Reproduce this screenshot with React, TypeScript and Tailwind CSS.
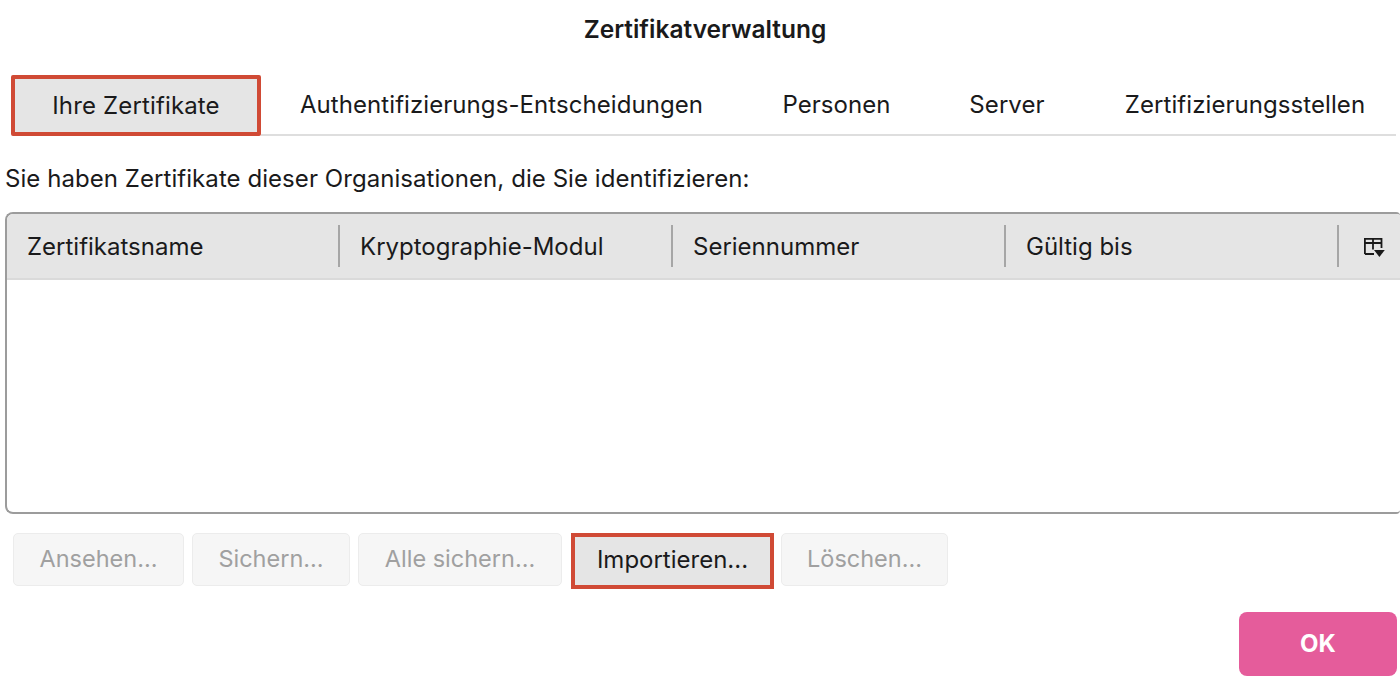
import React from 'react';

const tabs = ['Authentifizierungs-Entscheidungen', 'Personen', 'Server', 'Zertifizierungsstellen'];
const tabWidths = ['w-[481px]', 'w-[189px]', 'w-[152px]', 'w-[313px] pl-[11px]'];
const columns = ['Zertifikatsname', 'Kryptographie-Modul', 'Seriennummer', 'Gültig bis'];

const ColumnPickerIcon = () => (
  <svg width="22" height="22" viewBox="0 0 22 22" fill="none">
    <path d="M1.9 18V2.9H18.5V12M1.9 7H18.5M10 2.9V13.5M1.9 18H11" stroke="#1a1a1a" strokeWidth="1.8" />
    <path d="M11 14H21.8L16.4 21Z" fill="#1a1a1a" />
  </svg>
);

const DisabledButton: React.FC<{ label: string; width: string }> = ({ label, width }) => (
  <button className={`${width} h-[53px] pb-[1px] rounded-[5px] border border-[#ececec] bg-[#f6f6f6] text-[#a0a0a0] text-[23.5px]`}>
    {label}
  </button>
);

export default function App() {
  return (
    <div className="w-[1400px] h-[686px] overflow-hidden bg-white text-[#1a1a1b] font-['Inter',sans-serif]">
      <h1 className="pt-[14px] pl-[10px] h-[75px] text-center text-[24.5px] leading-[30px] font-semibold">Zertifikatverwaltung</h1>

      <div className="flex pl-[11px] pr-[4px]">
        <div className="w-[250px] h-[61px] flex items-center justify-center border-4 border-[#d04a35] bg-[#e5e5e5] rounded-[2px] text-[24px] tracking-[0.15px]">
          Ihre Zertifikate
        </div>
        <div className="flex-1 flex h-[61px] border-b-2 border-[#dedede]">
          {tabs.map((tab, i) => (
            <div key={tab} className={`${tabWidths[i]} flex items-center justify-center text-[24px] tracking-[0.07px]`}>
              {tab}
            </div>
          ))}
        </div>
      </div>

      <p className="pl-[5px] pt-[27px] h-[76px] text-[24px] leading-[32px] tracking-[0.06px] whitespace-nowrap">Sie haben Zertifikate dieser Organisationen, die Sie identifizieren:</p>

      <div className="ml-[5px] h-[302px] rounded-l-[8px] rounded-r-[4px] border-2 border-r-0 border-[#9c9c9c] overflow-hidden">
        <div className="flex items-center h-[66px] bg-[#e5e5e5] border-b-2 border-[#dadada]">
          {columns.map((col) => (
            <div key={col} className="w-[333px] h-[42px] flex items-center pl-[20px] pt-[1px] border-r-2 border-[#a6a6a6] text-[24px]">
              {col}
            </div>
          ))}
          <div className="flex-1 flex justify-center pl-[8px] pt-[2px]">
            <ColumnPickerIcon />
          </div>
        </div>
      </div>

      <div className="flex gap-[8px] pl-[13px] pt-[19px]">
        <DisabledButton label="Ansehen..." width="w-[171px]" />
        <DisabledButton label="Sichern..." width="w-[158px]" />
        <DisabledButton label="Alle sichern..." width="w-[204px]" />
        <button className="w-[203px] h-[56px] pb-[3px] ml-[1px] -mr-[1px] border-4 border-[#d04a35] bg-[#e5e5e5] text-[24px]">Importieren...</button>
        <DisabledButton label="Löschen..." width="w-[167px]" />
      </div>

      <div className="flex justify-end pr-[3px] pt-[23px]">
        <button className="w-[158px] h-[64px] rounded-[8px] bg-[#e55c9b] text-white text-[24px] font-bold">OK</button>
      </div>
    </div>
  );
}
